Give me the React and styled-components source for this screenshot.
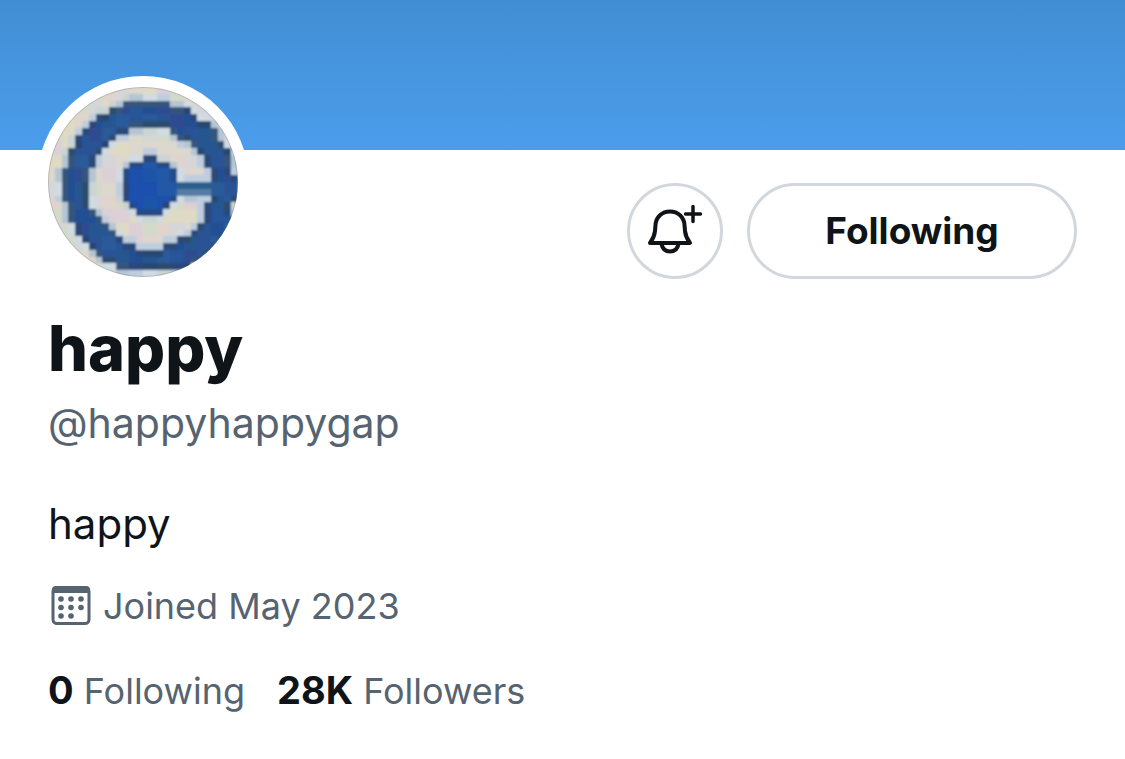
import React from "react";
import styled, { createGlobalStyle } from "styled-components";

const GlobalStyle = createGlobalStyle`
  *, *::before, *::after { box-sizing: border-box; }
  body {
    margin: 0;
    background: #ffffff;
    color: #0f1419;
    font-family: Inter, "Liberation Sans", sans-serif;
  }
`;

const Banner = styled.div`
  height: 150px;
  background: linear-gradient(#428ed3, #4b9dec);
`;

const Profile = styled.main`
  padding: 0 48px 48px;
`;

const TopRow = styled.div`
  display: flex;
  justify-content: space-between;
  align-items: flex-start;
`;

const AvatarFrame = styled.div`
  width: 212px;
  height: 212px;
  margin: -74px 0 0 -11px;
  padding: 11px;
  border-radius: 50%;
  background: #ffffff;

  svg {
    display: block;
    width: 190px;
    height: 190px;
    border-radius: 50%;
  }
`;

const Actions = styled.div`
  display: flex;
  gap: 24px;
  padding-top: 33px;
`;

const PillButton = styled.button`
  display: flex;
  align-items: center;
  justify-content: center;
  width: ${(p) => (p.$round ? 96 : 330)}px;
  height: 96px;
  padding: 0;
  border: 3px solid #d2d7de;
  border-radius: 48px;
  background: #ffffff;
  color: #0f1419;
  font: 700 37px/48px Inter, "Liberation Sans", sans-serif;
  cursor: pointer;
`;

const Name = styled.h1`
  margin: 20px 0 0;
  font-size: 63px;
  line-height: 80px;
  font-weight: 800;
`;

const Handle = styled.p`
  margin: 7px 0 0;
  font-size: 41px;
  line-height: 56px;
  color: #566370;
`;

const Bio = styled.p`
  margin: 45px 0 0;
  font-size: 42px;
  line-height: 56px;
`;

const Joined = styled.p`
  display: flex;
  align-items: center;
  gap: 12px;
  margin: 30px 0 0;
  padding-left: 3px;
  font-size: 36px;
  line-height: 48px;
  color: #566370;
`;

const Stats = styled.nav`
  display: flex;
  gap: 32px;
  margin-top: 36px;
`;

const Stat = styled.a`
  font-size: 36px;
  line-height: 48px;
  color: #566370;
  text-decoration: none;

  strong {
    color: #0f1419;
    font-size: 38px;
    font-weight: 700;
  }
`;

/* Each row lists [kind, from, to) spans; anything left over is light. */
const ROWS = [
  [],
  [],
  [["D", 11, 18]],
  [["D", 9, 21]],
  [["D", 7, 22]],
  [["D", 6, 24]],
  [["D", 5, 12], ["D", 18, 25]],
  [["D", 4, 10], ["D", 19, 25]],
  [["D", 4, 9], ["D", 21, 26]],
  [["D", 3, 8], ["D", 22, 27]],
  [["D", 3, 7], ["B", 14, 16], ["D", 23, 27]],
  [["D", 3, 7], ["B", 12, 18], ["D", 23, 27]],
  [["D", 2, 6], ["B", 11, 19], ["D", 24, 27]],
  [["D", 2, 6], ["B", 11, 19], ["D", 24, 28]],
  [["D", 2, 6], ["B", 11, 19], ["T", 19, 24], ["D", 24, 28]],
  [["D", 2, 6], ["B", 11, 19], ["M", 19, 24], ["D", 24, 28]],
  [["D", 2, 6], ["B", 11, 19], ["D", 24, 28]],
  [["D", 3, 6], ["B", 12, 18], ["D", 23, 27]],
  [["D", 3, 7], ["B", 13, 17], ["D", 23, 27]],
  [["D", 3, 8], ["D", 23, 28]],
  [["D", 4, 9], ["D", 22, 28]],
  [["D", 4, 10], ["D", 21, 27]],
  [["D", 5, 11], ["D", 19, 26]],
  [["D", 6, 13], ["D", 17, 25]],
  [["D", 7, 24]],
  [["D", 8, 23]],
  [["D", 10, 21]],
  [],
];

const TONES = {
  D: ["#27559a", "#2a5296", "#234f94", "#2b5a9a", "#2d4c92", "#265690"],
  edge: ["#2a4a78", "#264672", "#34547c", "#2c4d6e"],
  B: ["#1f55a8", "#1c50ae", "#2459a6"],
  Bedge: ["#294774", "#234c88"],
  T: ["#2c5f8c"],
  M: ["#557ba6"],
  L: ["#dcd8cd", "#dfdac4", "#dccfd6", "#d3dac9", "#e0d4cc", "#d6d5d8"],
  Ledge: ["#becee0", "#d0dbe4", "#b4c6d4", "#cad4d4"],
};

const GRID = ROWS.map((spans) => {
  const row = Array(28).fill("L");
  spans.forEach(([kind, from, to]) => row.fill(kind, from, to));
  return row;
});

const toneAt = (x, y) => {
  const kind = GRID[y][x];
  const light = kind === "L";
  const touches = [[1, 0], [-1, 0], [0, 1], [0, -1]].some(([dx, dy]) => {
    const next = GRID[y + dy]?.[x + dx];
    return next && (next === "L") !== light;
  });
  const edgeName = { D: "edge", B: "Bedge", L: "Ledge" }[kind];
  const list = TONES[touches && edgeName ? edgeName : kind];
  const px = x >> 1;
  const py = y >> 1;
  return list[(px * 7 + py * 11 + ((px * py) % 5)) % list.length];
};

function Avatar() {
  return (
    <AvatarFrame>
      <svg viewBox="0 0 28 28" role="img" aria-label="happy profile picture">
        <defs>
          <filter id="soften" x="0" y="0" width="1" height="1">
            <feGaussianBlur stdDeviation="0.18" />
          </filter>
        </defs>
        <rect width="28" height="28" fill="#d9d8cf" />
        <g filter="url(#soften)" shapeRendering="crispEdges">
          {GRID.map((row, y) =>
            row.map((_, x) => (
              <rect key={`${x}-${y}`} x={x} y={y} width="1.02" height="1.02" fill={toneAt(x, y)} />
            ))
          )}
        </g>
        <circle cx="14" cy="14" r="13.93" fill="none" stroke="#5b6672" strokeOpacity="0.3" strokeWidth="0.14" />
      </svg>
    </AvatarFrame>
  );
}

function BellPlusIcon() {
  return (
    <svg width="60" height="60" viewBox="0 3 60 60" fill="none" stroke="#0f1419" strokeWidth="4" strokeLinejoin="round" strokeLinecap="round" aria-hidden="true">
      <path d="M5 45 C8 41 9.500 38 10 33 L10.500 27 C11 19 17 13.500 25 13.500 C33 13.500 39 19 39.500 27 L40 33 C40.500 38 42 41 45 45 Z" />
      <path d="M16.500 46 C17.500 51 20.500 53.500 25 53.500 C29.500 53.500 32.500 51 33.500 46" />
      <path d="M48 8.500 V23.500 M40.500 16 H55.500" strokeWidth="3.500" />
    </svg>
  );
}

function CalendarIcon() {
  const dots = [[10, 14], [20, 14], [30, 14], [10, 22.5], [20, 22.5], [30, 22.5], [10, 31], [20, 31]];
  return (
    <svg width="40" height="40" viewBox="0 1 40 40" aria-hidden="true">
      <rect x="2" y="2.500" width="36" height="36" rx="4" fill="none" stroke="#566370" strokeWidth="3" />
      <path d="M1 8 V5 Q1 1 5 1 H35 Q39 1 39 5 V8 Z" fill="#566370" />
      {dots.map(([x, y]) => (
        <circle key={`${x}-${y}`} cx={x} cy={y} r="2.800" fill="#566370" />
      ))}
    </svg>
  );
}

export default function App() {
  return (
    <>
      <GlobalStyle />
      <Banner />
      <Profile>
        <TopRow>
          <Avatar />
          <Actions>
            <PillButton $round type="button" aria-label="Turn on notifications">
              <BellPlusIcon />
            </PillButton>
            <PillButton type="button">Following</PillButton>
          </Actions>
        </TopRow>
        <Name>happy</Name>
        <Handle>@happyhappygap</Handle>
        <Bio>happy</Bio>
        <Joined>
          <CalendarIcon />
          Joined May 2023
        </Joined>
        <Stats aria-label="Connections">
          <Stat href="#following"><strong>0</strong> Following</Stat>
          <Stat href="#followers"><strong>28K</strong> Followers</Stat>
        </Stats>
      </Profile>
    </>
  );
}
